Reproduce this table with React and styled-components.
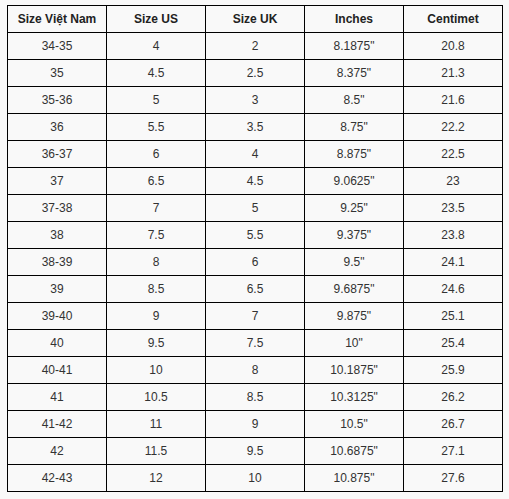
import React from 'react';
import styled, { createGlobalStyle } from 'styled-components';

const GlobalStyle = createGlobalStyle`
	html, body {
		margin: 0;
		padding: 0;
		background: #f9f9f9;
	}
	body {
		font-family: "Liberation Sans", Arial, sans-serif;
	}
`;

const headers = ['Size Việt Nam', 'Size US', 'Size UK', 'Inches', 'Centimet'];

const rows = [
	['34-35', '4', '2', '8.1875"', '20.8'],
	['35', '4.5', '2.5', '8.375"', '21.3'],
	['35-36', '5', '3', '8.5"', '21.6'],
	['36', '5.5', '3.5', '8.75"', '22.2'],
	['36-37', '6', '4', '8.875"', '22.5'],
	['37', '6.5', '4.5', '9.0625"', '23'],
	['37-38', '7', '5', '9.25"', '23.5'],
	['38', '7.5', '5.5', '9.375"', '23.8'],
	['38-39', '8', '6', '9.5"', '24.1'],
	['39', '8.5', '6.5', '9.6875"', '24.6'],
	['39-40', '9', '7', '9.875"', '25.1'],
	['40', '9.5', '7.5', '10"', '25.4'],
	['40-41', '10', '8', '10.1875"', '25.9'],
	['41', '10.5', '8.5', '10.3125"', '26.2'],
	['41-42', '11', '9', '10.5"', '26.7'],
	['42', '11.5', '9.5', '10.6875"', '27.1'],
	['42-43', '12', '10', '10.875"', '27.6'],
];

const Page = styled.div`
	padding: 5px 0 0 7px;
`;

const SizeTable = styled.table`
	border-collapse: collapse;
	table-layout: fixed;
	width: 496px;
	color: #333;
	font-size: 12px;
`;

const Row = styled.tr`
	height: 27px;
`;

const HeadCell = styled.th`
	border: 1px solid #000;
	padding: 0;
	font-weight: bold;
	color: #222;
	text-align: center;
	vertical-align: middle;
`;

const Cell = styled.td`
	border: 1px solid #000;
	padding: 0;
	text-align: center;
	vertical-align: middle;
`;

export default function App() {
	return (
		<Page>
			<GlobalStyle />
			<SizeTable>
				<thead>
					<Row>
						{headers.map(h => (
							<HeadCell key={h}>{h}</HeadCell>
						))}
					</Row>
				</thead>
				<tbody>
					{rows.map(r => (
						<Row key={r[0]}>
							{r.map((v, i) => (
								<Cell key={i}>{v}</Cell>
							))}
						</Row>
					))}
				</tbody>
			</SizeTable>
		</Page>
	);
}
